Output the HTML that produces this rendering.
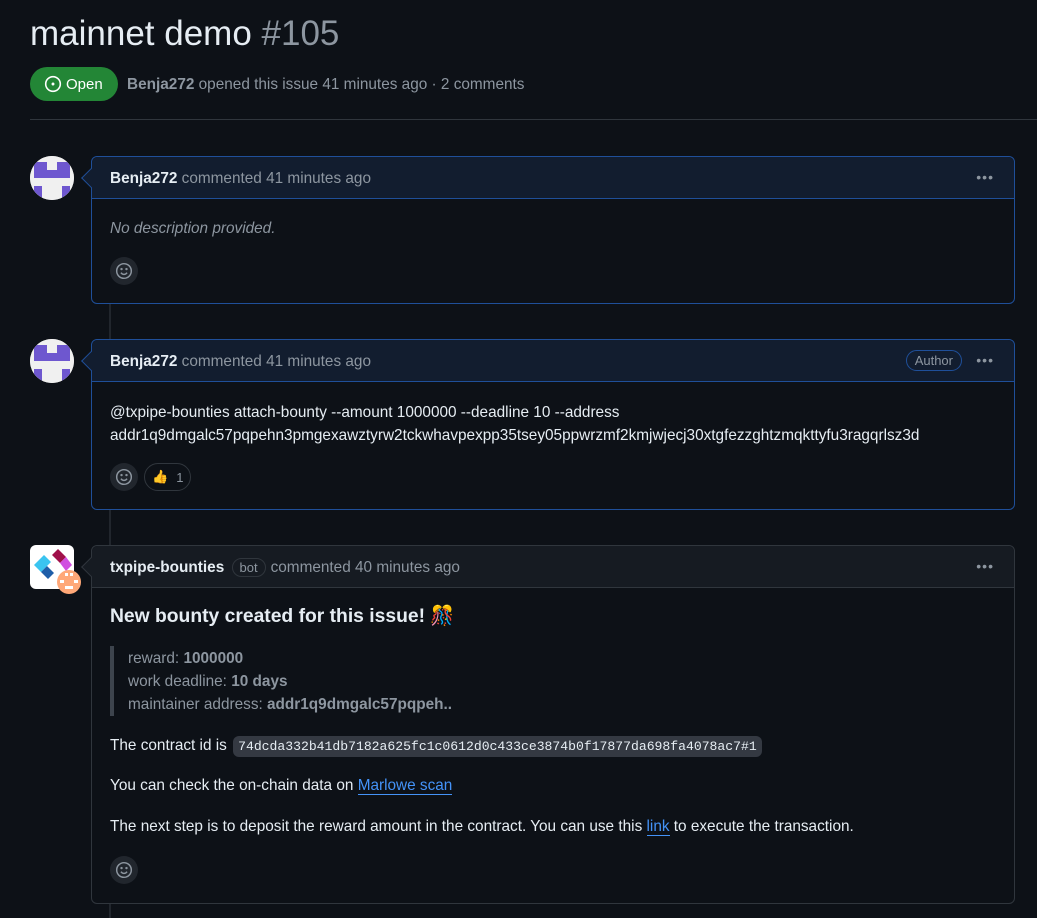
<!DOCTYPE html>
<html><head><meta charset="utf-8"><style>
*{box-sizing:border-box;margin:0;padding:0}
body{width:1037px;height:918px;background:#0d1117;color:#e6edf3;font-family:"Liberation Sans",sans-serif;font-size:15.35px;position:relative;overflow:hidden}
.a{position:absolute}
.muted{color:#8d96a0}
.box{position:absolute;left:91px;width:924px;border:1px solid #30363d;border-radius:6px}
.box.blue{border-color:#1f4f99}
.hd{height:42px;border-bottom:1px solid #30363d;background:#161b22;border-radius:6px 6px 0 0;padding:0 18px;display:flex;align-items:center;font-size:15.35px;position:relative;padding-top:2px}
.blue .hd{background:#121d2f;border-bottom-color:#1f4f99}
.hd b{color:#e6edf3}
.dots{position:absolute;right:20px;top:12px;color:#8d96a0;font-size:14px;letter-spacing:1px}
.caret{position:absolute;left:-8px;top:14px;width:14px;height:14px;transform:rotate(45deg);background:#161b22;border-left:1px solid #30363d;border-bottom:1px solid #30363d}
.blue .caret{background:#121d2f;border-color:#1f4f99}
.react{position:absolute;width:28px;height:28px;border-radius:50%;background:#21262d;display:flex;align-items:center;justify-content:center}
.line{position:absolute;left:109px;width:2px;background:#21262d}
.av{position:absolute;left:30px;width:44px;height:44px;border-radius:50%;overflow:hidden;background:#f0f0f0}
code{font-family:"Liberation Mono",monospace;font-size:13.1px;background:#343942;border-radius:6px;padding:3px 5px;margin-left:2px}
a{color:#4493f8;text-decoration:none;border-bottom:1px solid #4493f8}
</style></head><body>
<div class="a" style="left:30px;top:14px;font-size:35px;color:#e6edf3">mainnet demo <span class="muted">#105</span></div>
<div class="a" style="left:30px;top:67px;width:88px;height:34px;border-radius:17px;background:#238636;display:flex;align-items:center;padding-left:14px;font-size:15px;color:#fff">
<svg width="18" height="18" viewBox="0 0 16 16" style="margin-right:4px"><circle cx="8" cy="8" r="6.5" fill="none" stroke="#fff" stroke-width="1.4"/><circle cx="8" cy="8" r="1.3" fill="#fff"/></svg>Open</div>
<div class="a muted" style="left:127px;top:76px;font-size:15.35px"><b>Benja272</b> opened this issue 41 minutes ago · 2 comments</div>
<div class="a" style="left:30px;top:119px;width:1007px;height:1px;background:#30363d"></div>

<div class="line" style="top:303px;height:36px"></div>
<div class="line" style="top:509px;height:36px"></div>
<div class="line" style="top:903px;height:15px"></div>

<svg class="av" style="top:156px" viewBox="0 0 44 44"><rect width="44" height="44" fill="#f0f0f0"/><path d="M4 6h13v8h10v-8h13v16h-36z" fill="#6e57cf"/><path d="M4 30h8v14h-8zM32 30h8v14h-8z" fill="#6e57cf"/></svg>
<div class="box blue" style="top:156px;height:148px">
<div class="hd"><div class="caret"></div><b>Benja272</b>&nbsp;<span class="muted">commented 41 minutes ago</span><span class="dots">•••</span></div>
<div class="a muted" style="left:18px;top:63px;font-style:italic">No description provided.</div>
<div class="react" style="left:18px;top:100px"><svg width="18" height="18" viewBox="0 0 16 16" fill="none" stroke="#8d96a0" stroke-width="1.3"><circle cx="8" cy="8" r="6.5"/><path d="M5.3 9.5c.7 1 1.6 1.5 2.7 1.5s2-.5 2.7-1.5"/><circle cx="5.8" cy="6.3" r=".4" fill="#8d96a0"/><circle cx="10.2" cy="6.3" r=".4" fill="#8d96a0"/></svg></div>
</div>

<svg class="av" style="top:339px" viewBox="0 0 44 44"><rect width="44" height="44" fill="#f0f0f0"/><path d="M4 6h13v8h10v-8h13v16h-36z" fill="#6e57cf"/><path d="M4 30h8v14h-8zM32 30h8v14h-8z" fill="#6e57cf"/></svg>
<div class="box blue" style="top:339px;height:171px">
<div class="hd"><div class="caret"></div><b>Benja272</b>&nbsp;<span class="muted">commented 41 minutes ago</span>
<span class="a muted" style="right:52px;top:10px;border:1px solid #1f4f99;border-radius:12px;padding:2px 8px;font-size:13px">Author</span><span class="dots">•••</span></div>
<div class="a" style="left:18px;top:61px;line-height:23px">@txpipe-bounties attach-bounty --amount 1000000 --deadline 10 --address<br>addr1q9dmgalc57pqpehn3pmgexawztyrw2tckwhavpexpp35tsey05ppwrzmf2kmjwjecj30xtgfezzghtzmqkttyfu3ragqrlsz3d</div>
<div class="react" style="left:18px;top:123px"><svg width="18" height="18" viewBox="0 0 16 16" fill="none" stroke="#8d96a0" stroke-width="1.3"><circle cx="8" cy="8" r="6.5"/><path d="M5.3 9.5c.7 1 1.6 1.5 2.7 1.5s2-.5 2.7-1.5"/><circle cx="5.8" cy="6.3" r=".4" fill="#8d96a0"/><circle cx="10.2" cy="6.3" r=".4" fill="#8d96a0"/></svg></div>
<div class="a" style="left:52px;top:123px;width:47px;height:28px;border:1px solid #30363d;border-radius:14px;display:flex;align-items:center;padding-left:7px;font-size:13px"><span style="color:#f0b400">👍</span><span class="muted" style="margin-left:8px">1</span></div>
</div>

<div class="a" style="left:30px;top:545px;width:44px;height:44px;border-radius:6px;background:#fff;overflow:hidden">
<svg width="44" height="44" viewBox="0 0 44 44"><path d="M4 20l10-10 7 7-10 10z" fill="#3ac4f0"/><path d="M11 27l7 7 6-6-7-7z" fill="#1e5ea8"/><path d="M22 10l6-6 8 8-6 6z" fill="#a0104a"/><path d="M30 18l6-6 6 8-6 6z" fill="#d04fe0"/></svg></div>
<div class="a" style="left:57px;top:570px;width:24px;height:24px;border-radius:50%;background:#ffa878;overflow:hidden"><svg width="24" height="24"><rect x="8" y="3" width="3" height="3" fill="#fff"/><rect x="13" y="3" width="3" height="3" fill="#fff"/><rect x="3" y="10" width="4" height="3" fill="#fff"/><rect x="17" y="10" width="4" height="3" fill="#fff"/><rect x="8" y="16" width="8" height="3" fill="#fff"/></svg></div>
<div class="box" style="top:545px;height:359px">
<div class="hd"><div class="caret"></div><b>txpipe-bounties</b>&nbsp;<span class="muted" style="border:1px solid #30363d;border-radius:12px;padding:1px 7px;font-size:13px;margin:0 5px 0 3px">bot</span><span class="muted">commented 40 minutes ago</span><span class="dots">•••</span></div>
<div class="a" style="left:18px;top:58px;font-size:19.3px;font-weight:bold">New bounty created for this issue! 🎊</div>
<div class="a muted" style="left:18px;top:100px;border-left:4px solid #3d444d;padding-left:14px;line-height:23px;height:70px;padding-top:1px">reward: <b>1000000</b><br>work deadline: <b>10 days</b><br>maintainer address: <b>addr1q9dmgalc57pqpeh..</b></div>
<div class="a" style="left:18px;top:191px">The contract id is <code>74dcda332b41db7182a625fc1c0612d0c433ce3874b0f17877da698fa4078ac7#1</code></div>
<div class="a" style="left:18px;top:231px">You can check the on-chain data on <a>Marlowe scan</a></div>
<div class="a" style="left:18px;top:272px">The next step is to deposit the reward amount in the contract. You can use this <a>link</a> to execute the transaction.</div>
<div class="react" style="left:18px;top:310px"><svg width="18" height="18" viewBox="0 0 16 16" fill="none" stroke="#8d96a0" stroke-width="1.3"><circle cx="8" cy="8" r="6.5"/><path d="M5.3 9.5c.7 1 1.6 1.5 2.7 1.5s2-.5 2.7-1.5"/><circle cx="5.8" cy="6.3" r=".4" fill="#8d96a0"/><circle cx="10.2" cy="6.3" r=".4" fill="#8d96a0"/></svg></div>
</div>
</body></html>
